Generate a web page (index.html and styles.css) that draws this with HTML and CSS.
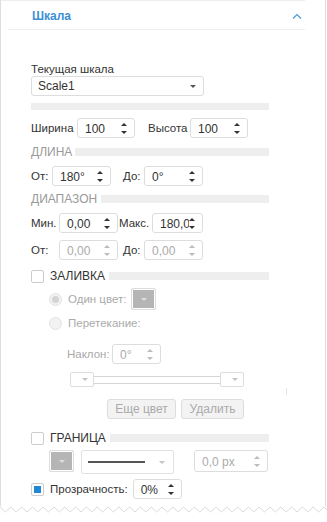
FILE: index.html
```html
<!DOCTYPE html>
<html lang="ru">
<head>
    <meta charset="UTF-8">
    <meta name="viewport" content="width=device-width, initial-scale=1.0">
    <title>Шкала</title>
    <link rel="stylesheet" href="styles.css">
</head>
<body>
    <div class="frame">
        <div class="panel">
            <div class="header">
                <span class="header-title">Шкала</span>
                <svg class="chevron" width="10" height="6" viewBox="0 0 10 6"><polyline points="1,5.5 5,1.5 9,5.5" fill="none" stroke="#4a9ad8" stroke-width="1.2"/></svg>
            </div>

            <div class="content">
                <div class="label top-label">Текущая шкала</div>
                <div class="select">
                    <span>Scale1</span>
                    <span class="caret"></span>
                </div>
                <div class="bar full"></div>

                <div class="row r1">
                    <span class="label w46">Ширина</span>
                    <div class="spin w58"><span>100</span><i class="arrows"></i></div>
                    <span class="label w42 ml13">Высота</span>
                    <div class="spin w58"><span>100</span><i class="arrows"></i></div>
                </div>

                <div class="section s1">
                    <span class="section-title">ДЛИНА</span>
                    <span class="bar"></span>
                </div>

                <div class="row r2">
                    <span class="label w21">От:</span>
                    <div class="spin w59"><span>180°</span><i class="arrows"></i></div>
                    <span class="label w21 ml12">До:</span>
                    <div class="spin w59"><span>0°</span><i class="arrows"></i></div>
                </div>

                <div class="section s2">
                    <span class="section-title">ДИАПАЗОН</span>
                    <span class="bar"></span>
                </div>

                <div class="row r3">
                    <span class="label w28">Мин.</span>
                    <div class="spin w59"><span>0,00</span><i class="arrows"></i></div>
                    <span class="label w33 ml1">Макс.</span>
                    <div class="spin w51"><span>180,0</span><i class="arrows"></i></div>
                </div>

                <div class="row r4">
                    <span class="label w28">От:</span>
                    <div class="spin w59 disabled"><span>0,00</span><i class="arrows"></i></div>
                    <span class="label w21 ml5">До:</span>
                    <div class="spin w59 disabled"><span>0,00</span><i class="arrows"></i></div>
                </div>

                <div class="section s3">
                    <span class="checkbox"></span>
                    <span class="check-title">ЗАЛИВКА</span>
                    <span class="bar"></span>
                </div>

                <div class="row r5 indent18">
                    <span class="radio checked"></span>
                    <span class="label muted">Один цвет:</span>
                    <span class="color-btn"><i class="caret light"></i></span>
                </div>

                <div class="row r6 indent18">
                    <span class="radio"></span>
                    <span class="label muted">Перетекание:</span>
                </div>

                <div class="row r7 indent36">
                    <span class="label muted w45">Наклон:</span>
                    <div class="spin w49 disabled"><span>0°</span><i class="arrows"></i></div>
                </div>

                <div class="slider">
                    <span class="stop"><i class="caret pale"></i></span>
                    <span class="track"></span>
                    <span class="stop"><i class="caret pale"></i></span>
                    <span class="scroll-mark"></span>
                </div>

                <div class="buttons">
                    <button class="btn w69">Еще цвет</button>
                    <button class="btn w63">Удалить</button>
                </div>

                <div class="section s4">
                    <span class="checkbox"></span>
                    <span class="check-title">ГРАНИЦА</span>
                    <span class="bar"></span>
                </div>

                <div class="row r8 indent18">
                    <span class="color-btn"><i class="caret light"></i></span>
                    <div class="line-select">
                        <span class="line"></span>
                        <i class="caret pale"></i>
                    </div>
                    <div class="spin px disabled"><span>0,0 px</span><i class="arrows"></i></div>
                </div>

                <div class="row r9">
                    <span class="checkbox on"></span>
                    <span class="check-title">Прозрачность:</span>
                    <div class="spin w49"><span>0%</span><i class="arrows"></i></div>
                </div>
            </div>
        </div>
    </div>
    <svg class="zigzag" width="327" height="8" viewBox="0 0 327 8">
        <polyline fill="none" stroke="#dadada" stroke-width="1"
            points="0,2 5.4,7 10.8,2 16.2,7 21.6,2 27,7 32.4,2 37.8,7 43.2,2 48.6,7 54,2 59.4,7 64.8,2 70.2,7 75.6,2 81,7 86.4,2 91.8,7 97.2,2 102.6,7 108,2 113.4,7 118.8,2 124.2,7 129.6,2 135,7 140.4,2 145.8,7 151.2,2 156.6,7 162,2 167.4,7 172.8,2 178.2,7 183.6,2 189,7 194.4,2 199.8,7 205.2,2 210.6,7 216,2 221.4,7 226.8,2 232.2,7 237.6,2 243,7 248.4,2 253.8,7 259.2,2 264.6,7 270,2 275.4,7 280.8,2 286.2,7 291.6,2 297,7 302.4,2 307.8,7 313.2,2 318.6,7 324,2 329.4,7"/>
    </svg>
</body>
</html>
```

FILE: styles.css
```css
body {
    margin: 0;
    padding: 0;
    background-color: #fff;
    font-family: "Liberation Sans", Arial, sans-serif;
    font-size: 11.5px;
    color: #333;
}

.frame {
    width: 324px;
    height: 506px;
    border-left: 1px solid #ddd;
    border-right: 1px solid #ddd;
    position: relative;
}

.panel {
    width: 304px;
    border-top: 1px solid #eee;
}

.header {
    height: 28px;
    margin-left: 7px;
    border-bottom: 1px solid #eee;
    display: flex;
    align-items: center;
    justify-content: space-between;
    padding-right: 3px;
}

.header-title {
    margin-left: 24px;
    margin-top: 1px;
    font-weight: bold;
    color: #3d8fd6;
    font-size: 12px;
}

.chevron {
    display: block;
    margin-top: 2px;
}

.content {
    padding-left: 30px;
}

.label {
    line-height: 14px;
    white-space: nowrap;
    flex: none;
}

.top-label {
    margin-top: 32px;
}

.select {
    height: 18px;
    width: 158px;
    border: 1px solid #ddd;
    border-radius: 3px;
    display: flex;
    align-items: center;
    justify-content: space-between;
    padding: 0 7px 0 6px;
    font-size: 12px;
}

.caret {
    display: block;
    width: 0;
    height: 0;
    border-left: 3px solid transparent;
    border-right: 3px solid transparent;
    border-top: 3px solid #555;
}

.caret.light {
    border-top-color: #ddd;
}

.caret.pale {
    border-top-color: #c4c4c4;
}

.bar {
    display: block;
    height: 7px;
    background-color: #eee;
}

.bar.full {
    width: 238px;
    margin-top: 7px;
}

.row {
    display: flex;
    align-items: center;
}

.r1 { margin-top: 8px; height: 20px; }
.r2 { margin-top: 7px; height: 20px; }
.r3 { margin-top: 7px; height: 20px; }
.r4 { margin-top: 7px; height: 20px; }
.r5 { margin-top: 5px; height: 22px; }
.r6 { margin-top: 6px; height: 14px; }
.r7 { margin-top: 14px; height: 20px; }
.r8 { margin-top: 5px; height: 24px; align-items: flex-start; }
.r9 { margin-top: 5px; height: 20px; }

.indent18 { padding-left: 18px; }
.indent36 { padding-left: 36px; }

.w21 { width: 21px; }
.w28 { width: 28px; }
.w33 { width: 33px; }
.w42 { width: 42px; }
.w45 { width: 45px; }
.w46 { width: 46px; }
.ml1 { margin-left: 1px; }
.ml5 { margin-left: 5px; }
.ml12 { margin-left: 12px; }
.ml13 { margin-left: 13px; }

.spin {
    height: 20px;
    box-sizing: border-box;
    border: 1px solid #ddd;
    border-radius: 3px;
    background-color: #fff;
    display: flex;
    align-items: center;
    padding-left: 7px;
    position: relative;
    flex: none;
    font-size: 12px;
}

.spin span {
    margin-top: 1px;
    white-space: nowrap;
}

.spin.w58 { width: 58px; }
.spin.w59 { width: 59px; }
.spin.w51 { width: 51px; }
.spin.w49 { width: 49px; }

.spin.disabled {
    color: #aaa;
}

.arrows {
    position: absolute;
    right: 7px;
    top: 4px;
    width: 6px;
    height: 11px;
    background-color: #fff;
}

.arrows::before,
.arrows::after {
    content: "";
    position: absolute;
    left: 0;
    border-left: 3px solid transparent;
    border-right: 3px solid transparent;
}

.arrows::before {
    top: 0;
    border-bottom: 3px solid #333;
}

.arrows::after {
    bottom: 0;
    border-top: 3px solid #333;
}

.disabled .arrows::before {
    border-bottom-color: #bbb;
}

.disabled .arrows::after {
    border-top-color: #bbb;
}

.section {
    display: flex;
    align-items: center;
    width: 238px;
    height: 14px;
}

.section .bar {
    flex: 1;
    height: 8px;
    margin-left: 3px;
}

.s1 { margin-top: 7px; }
.s2 { margin-top: 6px; }
.s3 { margin-top: 9px; }
.s4 { margin-top: 12px; }

.s2 .bar { margin-left: 4px; }
.s3 .bar, .s4 .bar { margin-left: 4px; }

.section-title {
    color: #999;
    line-height: 14px;
    font-size: 12px;
}

.check-title {
    line-height: 14px;
    white-space: nowrap;
    margin-left: 6px;
    font-size: 12px;
}

.r9 .check-title {
    font-size: 11.5px;
    margin-right: 5px;
}

.checkbox {
    width: 13px;
    height: 13px;
    box-sizing: border-box;
    border: 1px solid #ccc;
    border-radius: 2px;
    background-color: #fff;
    flex: none;
    position: relative;
}

.checkbox.on::after {
    content: "";
    position: absolute;
    left: 2px;
    top: 2px;
    width: 7px;
    height: 7px;
    background-color: #1f87d3;
}

.radio {
    width: 13px;
    height: 13px;
    box-sizing: border-box;
    border-radius: 50%;
    border: 1px solid #e2e2e2;
    background-color: #f2f2f2;
    margin-right: 6px;
    flex: none;
    position: relative;
}

.radio.checked::after {
    content: "";
    position: absolute;
    left: 2px;
    top: 2px;
    width: 7px;
    height: 7px;
    border-radius: 50%;
    background-color: #d4d4d4;
}

.muted {
    color: #aaa;
}

.color-btn {
    width: 25px;
    height: 22px;
    box-sizing: border-box;
    border: 1px solid #ddd;
    border-radius: 2px;
    background-color: #b5b5b5;
    box-shadow: inset 0 0 0 1px #fff;
    display: flex;
    align-items: center;
    justify-content: center;
    flex: none;
}

.r5 .color-btn {
    margin-left: 5px;
}

.slider {
    display: flex;
    align-items: center;
    margin-top: 8px;
    margin-left: 39px;
    width: 174px;
    height: 15px;
    position: relative;
}

.stop {
    width: 24px;
    height: 15px;
    box-sizing: border-box;
    border: 1px solid #ddd;
    border-radius: 2px;
    display: flex;
    align-items: center;
    justify-content: flex-end;
    padding-right: 5px;
    flex: none;
}

.track {
    flex: 1;
    height: 8px;
    box-sizing: border-box;
    border-top: 1px solid #d6d6d6;
    border-bottom: 1px solid #d6d6d6;
}

.scroll-mark {
    position: absolute;
    left: 216px;
    top: 16px;
    width: 1px;
    height: 7px;
    background-color: #e2e2e2;
}

.buttons {
    display: flex;
    gap: 5px;
    margin-top: 12px;
    margin-left: 76px;
}

.btn {
    height: 20px;
    box-sizing: border-box;
    border: 1px solid #ddd;
    border-radius: 3px;
    background-color: #f3f3f3;
    color: #aaa;
    font-family: "Liberation Sans", Arial, sans-serif;
    font-size: 12px;
    padding: 0;
}

.btn.w69 { width: 69px; }
.btn.w63 { width: 63px; }

.line-select {
    width: 93px;
    height: 24px;
    box-sizing: border-box;
    border: 1px solid #e2e2e2;
    border-radius: 2px;
    margin-left: 7px;
    display: flex;
    align-items: center;
    padding: 0 8px 0 6px;
    justify-content: space-between;
}

.line {
    width: 57px;
    height: 2px;
    background-color: #555;
}

.spin.px {
    width: 74px;
    height: 22px;
    margin-left: 20px;
    padding-left: 7px;
}

.spin.px .arrows {
    top: 5px;
}

.zigzag {
    display: block;
    margin-top: -1px;
}
```
